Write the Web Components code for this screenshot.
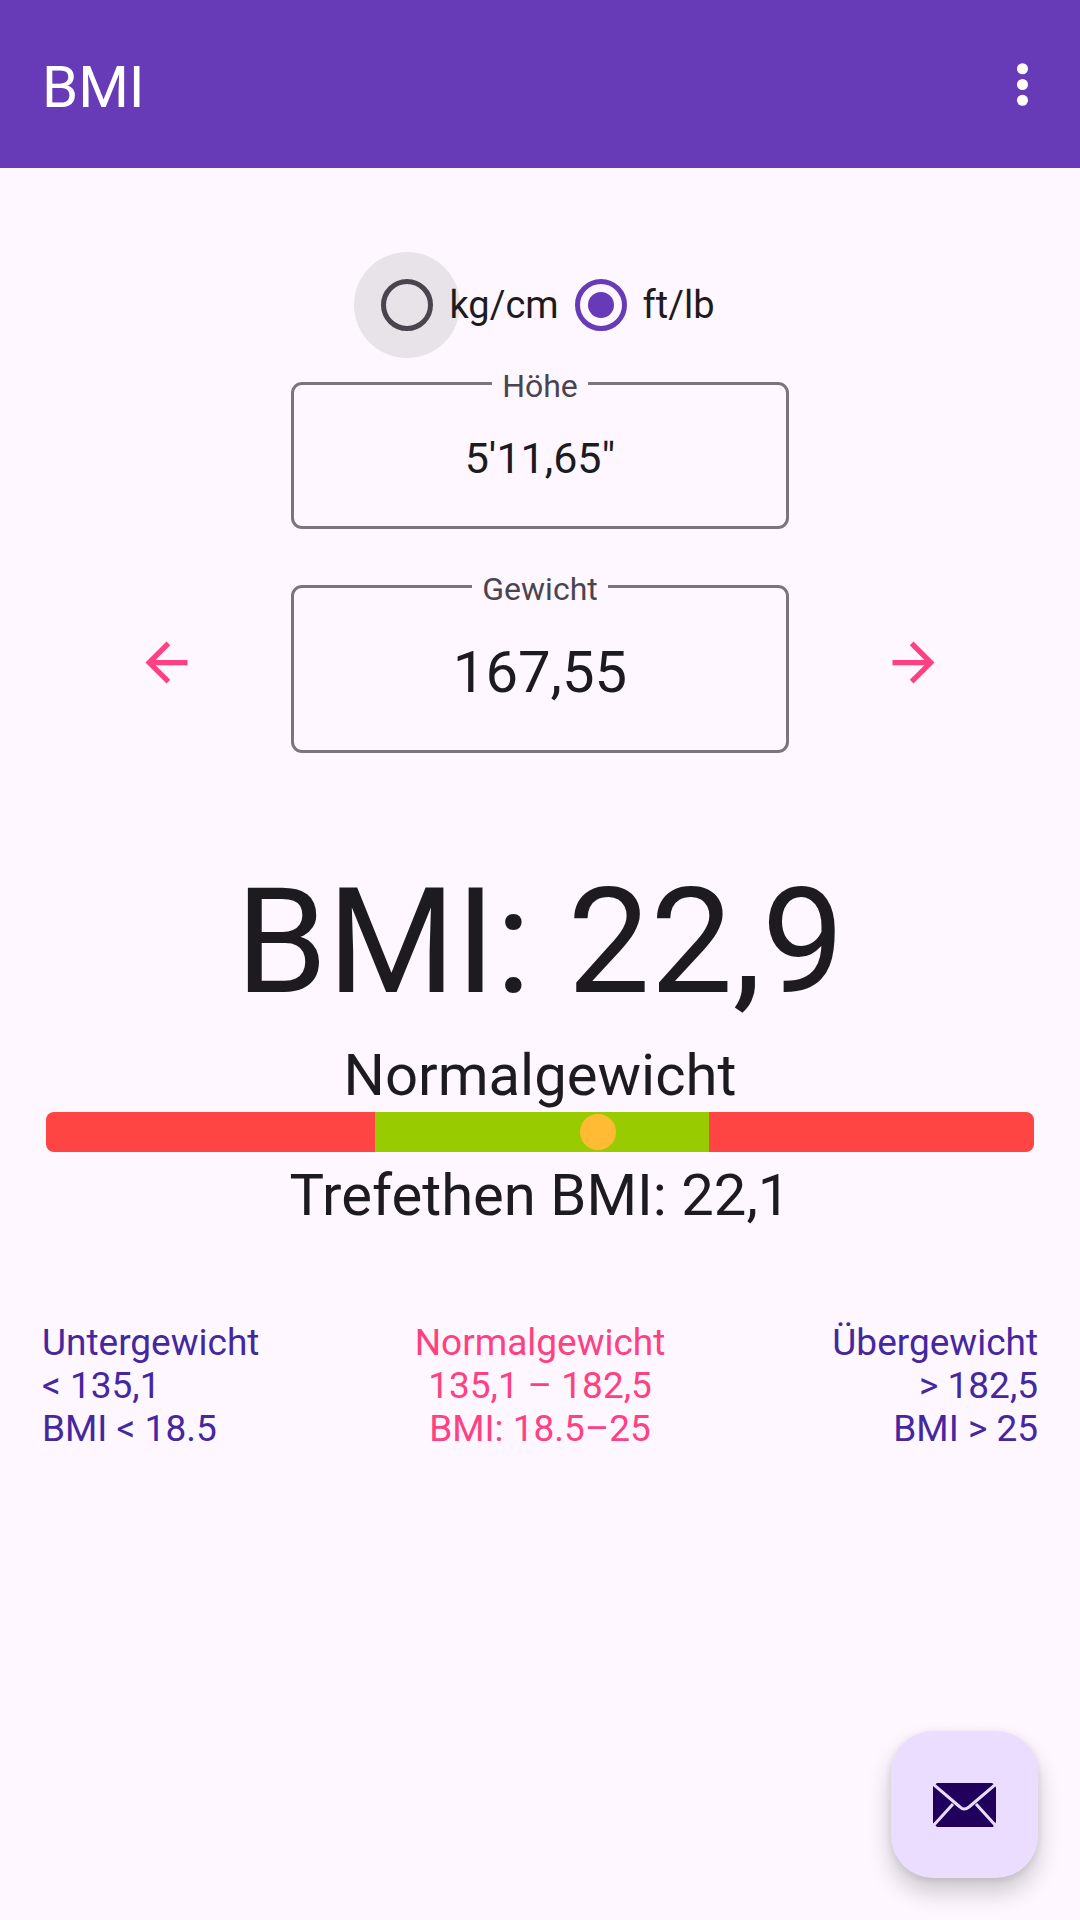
<!DOCTYPE html>
<html lang="de">
<head>
  <meta charset="utf-8">
  <meta name="viewport" content="width=device-width, initial-scale=1">
  <title>BMI</title>
  <style>
    body {
      margin: 0;
      background: #fef7ff;
    }
  </style>
</head>
<body>
  <bmi-app></bmi-app>

  <script>
    class AppHeader extends HTMLElement {
      constructor() {
        super();
        this.attachShadow({ mode: 'open' });
        this.shadowRoot.innerHTML = `
          <style>
            :host {
              display: flex;
              align-items: center;
              justify-content: space-between;
              height: 168px;
              padding: 0 26px 0 42px;
              background: #673ab7;
              color: #fff;
            }
            h1 {
              margin: 0;
              padding-top: 6px;
              font-size: 58px;
              line-height: 68px;
              font-weight: 400;
            }
            button {
              display: flex;
              padding: 0;
              border: none;
              background: none;
              color: inherit;
              cursor: pointer;
            }
          </style>
          <h1><slot></slot></h1>
          <button type="button" aria-label="Weitere Optionen">
            <svg width="63" height="63" viewBox="0 0 24 24" fill="currentColor">
              <circle cx="12" cy="6" r="2.1"/>
              <circle cx="12" cy="12" r="2.1"/>
              <circle cx="12" cy="18" r="2.1"/>
            </svg>
          </button>
        `;
      }
    }

    class UnitSwitch extends HTMLElement {
      constructor() {
        super();
        this.attachShadow({ mode: 'open' });
        this.shadowRoot.innerHTML = `
          <style>
            :host {
              display: flex;
              justify-content: center;
              height: 126px;
            }
            label {
              display: flex;
              align-items: center;
              font-size: 38px;
              line-height: 44px;
              cursor: pointer;
            }
            input {
              appearance: none;
              box-sizing: border-box;
              display: grid;
              place-items: center;
              width: 52px;
              height: 52px;
              margin: 0 16px;
              border: 5px solid #49454f;
              border-radius: 50%;
            }
            input:checked {
              border-color: #673ab7;
            }
            input:checked::before {
              content: "";
              width: 26px;
              height: 26px;
              border-radius: 50%;
              background: #673ab7;
            }
            /* touch ripple */
            .pressed {
              background: #e8e2e9;
              box-shadow: 0 0 0 27px #e8e2e9;
            }
          </style>
          <label><input type="radio" name="unit" value="metric" class="pressed">kg/cm</label>
          <label><input type="radio" name="unit" value="imperial" checked>ft/lb</label>
        `;
      }
    }

    class OutlinedField extends HTMLElement {
      constructor() {
        super();
        this.attachShadow({ mode: 'open' });
        this.shadowRoot.innerHTML = `
          <style>
            :host {
              display: block;
              --size: 43px;
              --line: 48px;
            }
            :host([large]) {
              --size: 58px;
              --line: 69px;
            }
            fieldset {
              min-width: 0;
              margin: 0;
              padding: 0;
              border: 3px solid #79747e;
              border-radius: 11px;
            }
            legend {
              margin: 0 auto;
              padding: 5px 10px 0;
              font-size: 32px;
              line-height: 26px;
              color: #49454f;
            }
            input {
              display: block;
              box-sizing: border-box;
              width: 100%;
              height: calc(var(--line) + 79px);
              padding: 35px 16px 44px;
              border: none;
              outline: none;
              background: none;
              font-family: inherit;
              font-size: var(--size);
              line-height: var(--line);
              color: inherit;
              text-align: center;
            }
          </style>
          <fieldset>
            <legend><label for="value"></label></legend>
            <input id="value" type="text">
          </fieldset>
        `;
      }

      connectedCallback() {
        this.shadowRoot.querySelector('label').textContent = this.getAttribute('label');
        this.shadowRoot.querySelector('input').value = this.getAttribute('value');
      }
    }

    class ArrowButton extends HTMLElement {
      constructor() {
        super();
        this.attachShadow({ mode: 'open' });
        this.shadowRoot.innerHTML = `
          <style>
            :host {
              display: block;
            }
            button {
              display: flex;
              padding: 0;
              border: none;
              background: none;
              color: #ff4081;
              cursor: pointer;
            }
            :host([forward]) svg {
              transform: scaleX(-1);
            }
          </style>
          <button type="button">
            <svg width="63" height="63" viewBox="0 0 24 24" fill="currentColor">
              <path d="M20 11H7.83l5.59-5.59L12 4l-8 8 8 8 1.41-1.41L7.83 13H20v-2z"/>
            </svg>
          </button>
        `;
      }

      connectedCallback() {
        const text = this.hasAttribute('forward') ? 'Mehr' : 'Weniger';
        this.shadowRoot.querySelector('button').setAttribute('aria-label', text);
      }
    }

    class BmiScale extends HTMLElement {
      constructor() {
        super();
        this.attachShadow({ mode: 'open' });
        this.shadowRoot.innerHTML = `
          <style>
            :host {
              display: flex;
              position: relative;
              height: 40px;
              margin: 0 4px;
              border-radius: 8px;
              overflow: hidden;
            }
            .under { flex: 329; background: #ff4444; }
            .normal { flex: 334; background: #99cc00; }
            .over { flex: 325; background: #ff4444; }
            .marker {
              position: absolute;
              top: 2px;
              left: 54%;
              width: 36px;
              height: 36px;
              border-radius: 50%;
              background: #ffbb33;
            }
          </style>
          <div class="under"></div>
          <div class="normal"></div>
          <div class="over"></div>
          <div class="marker"></div>
        `;
      }
    }

    class WeightRange extends HTMLElement {
      constructor() {
        super();
        this.attachShadow({ mode: 'open' });
        this.shadowRoot.innerHTML = `
          <style>
            :host {
              display: block;
              font-size: 37px;
              line-height: 43px;
              color: #4527a0;
            }
            :host([current]) {
              color: #ff4081;
            }
            ::slotted(*) {
              display: block;
            }
          </style>
          <slot></slot>
        `;
      }
    }

    class MailFab extends HTMLElement {
      constructor() {
        super();
        this.attachShadow({ mode: 'open' });
        this.shadowRoot.innerHTML = `
          <style>
            :host {
              display: block;
              position: fixed;
              right: 42px;
              bottom: 42px;
            }
            button {
              display: grid;
              place-items: center;
              width: 147px;
              height: 147px;
              padding: 0;
              border: none;
              border-radius: 42px;
              background: #eaddff;
              color: #21005d;
              box-shadow: 0 14px 24px rgba(0, 0, 0, 0.2), 0 2px 8px rgba(0, 0, 0, 0.1);
              cursor: pointer;
            }
          </style>
          <button type="button" aria-label="Nachricht senden">
            <svg width="63" height="44" viewBox="0 0 63 44">
              <path fill="currentColor" d="M4 0H59L62 2L63 5V39L60 44H4L0 40V3Z"/>
              <path fill="none" stroke="#eaddff" stroke-width="3" stroke-linejoin="round" d="M0 1L27 24Q31 28 36 24L63 1M0 43L20 21M63 43L43 21"/>
            </svg>
          </button>
        `;
      }
    }

    class BmiApp extends HTMLElement {
      constructor() {
        super();
        this.attachShadow({ mode: 'open' });
        this.shadowRoot.innerHTML = `
          <style>
            :host {
              display: block;
              min-height: 100vh;
              font-family: Roboto, sans-serif;
              color: #1d1b20;
            }
            main {
              padding: 74px 42px 0;
            }
            .fields {
              display: grid;
              grid-template-columns: 1fr 2fr 1fr;
              row-gap: 42px;
              align-items: center;
              justify-items: center;
            }
            outlined-field {
              grid-column: 2;
              justify-self: stretch;
            }
            arrow-button {
              grid-row: 2;
              grid-column: 1;
            }
            arrow-button[forward] {
              grid-column: 3;
            }
            p {
              margin: 0;
              font-size: 58px;
              line-height: 68px;
              text-align: center;
            }
            .bmi {
              margin: 103px 0 13px;
              font-size: 147px;
              line-height: 172px;
            }
            bmi-scale {
              margin-top: 3px;
              margin-bottom: 9px;
            }
            .ranges {
              display: grid;
              grid-template-columns: 1fr 1fr 1fr;
              margin-top: 92px;
            }
            weight-range:nth-child(2) { text-align: center; }
            weight-range:nth-child(3) { text-align: right; }
          </style>
          <app-header>BMI</app-header>
          <main>
            <unit-switch></unit-switch>
            <div class="fields">
              <outlined-field label="Höhe" value="5'11,65&quot;"></outlined-field>
              <arrow-button></arrow-button>
              <outlined-field label="Gewicht" value="167,55" large></outlined-field>
              <arrow-button forward></arrow-button>
            </div>
            <p class="bmi">BMI: 22,9</p>
            <p>Normalgewicht</p>
            <bmi-scale></bmi-scale>
            <p>Trefethen BMI: 22,1</p>
            <div class="ranges">
              <weight-range>
                <span>Untergewicht</span>
                <span>&lt; 135,1</span>
                <span>BMI &lt; 18.5</span>
              </weight-range>
              <weight-range current>
                <span>Normalgewicht</span>
                <span>135,1 – 182,5</span>
                <span>BMI: 18.5–25</span>
              </weight-range>
              <weight-range>
                <span>Übergewicht</span>
                <span>&gt; 182,5</span>
                <span>BMI &gt; 25</span>
              </weight-range>
            </div>
          </main>
          <mail-fab></mail-fab>
        `;
      }
    }

    customElements.define('app-header', AppHeader);
    customElements.define('unit-switch', UnitSwitch);
    customElements.define('outlined-field', OutlinedField);
    customElements.define('arrow-button', ArrowButton);
    customElements.define('bmi-scale', BmiScale);
    customElements.define('weight-range', WeightRange);
    customElements.define('mail-fab', MailFab);
    customElements.define('bmi-app', BmiApp);
  </script>
</body>
</html>
